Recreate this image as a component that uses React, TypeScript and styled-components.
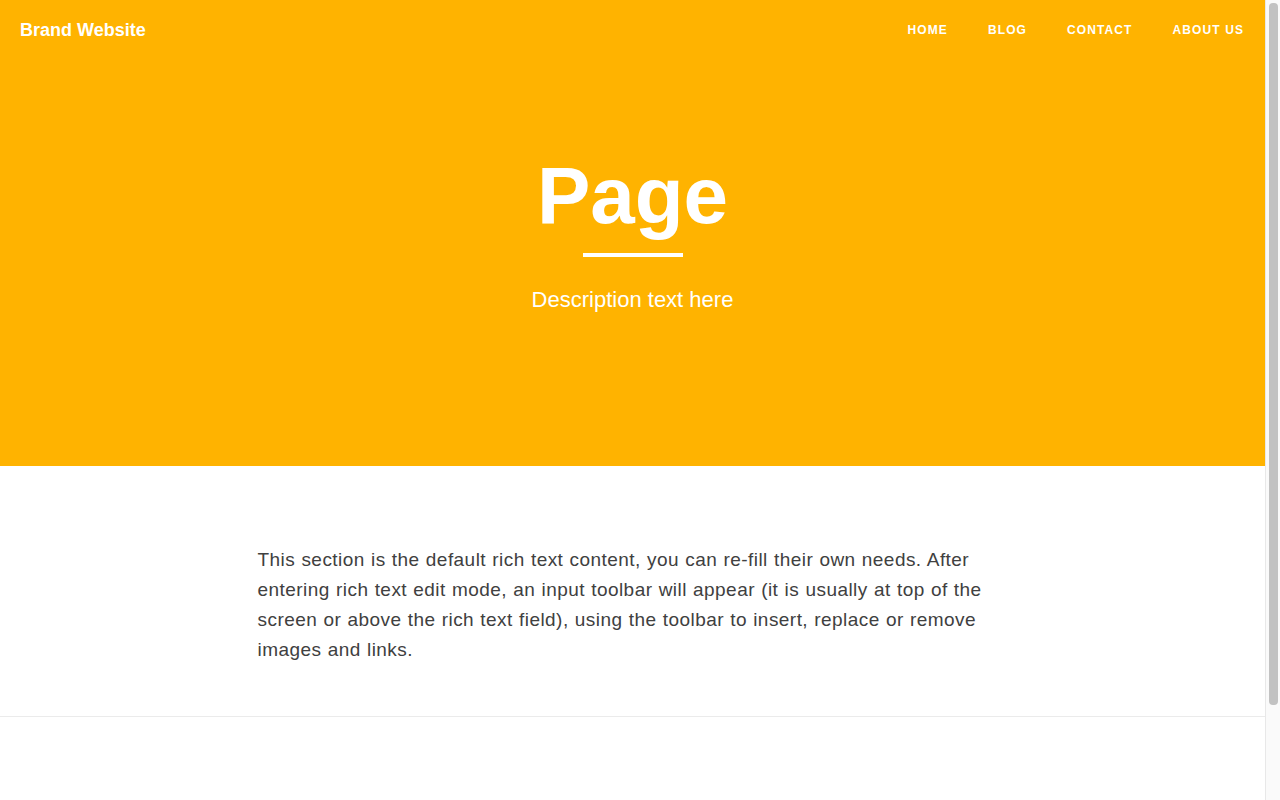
import React from "react";
import styled, { createGlobalStyle } from "styled-components";

const Global = createGlobalStyle`
  html, body { margin: 0; padding: 0; background: #fff; }
  body { font-family: "Liberation Sans", Arial, Helvetica, sans-serif; -webkit-font-smoothing: antialiased; }
  * { box-sizing: border-box; }
`;

const Page = styled.div`
  width: calc(100vw - 15px);
`;

const ScrollTrack = styled.div`
  position: fixed;
  top: 0;
  right: 0;
  width: 15px;
  height: 100vh;
  background: #fafafa;
  border-left: 1px solid #e8e8e8;
  padding: 3px 2px 0 3px;
`;

const ScrollThumb = styled.div`
  height: 702px;
  background: #c2c2c2;
  border-radius: 4px;
`;

const Hero = styled.header`
  background: #ffb300;
  height: 466px;
  display: flex;
  flex-direction: column;
  color: #fff;
`;

const NavBar = styled.nav`
  display: flex;
  align-items: center;
  justify-content: space-between;
  height: 60px;
  padding: 0 21px 0 20px;
`;

const Brand = styled.a`
  font-size: 18px;
  font-weight: 700;
  color: #fff;
  text-decoration: none;
`;

const Menu = styled.ul`
  list-style: none;
  display: flex;
  gap: 40px;
  margin: 0;
  padding: 0;
`;

const MenuItem = styled.li`
  font-size: 12px;
  font-weight: 700;
  letter-spacing: 1.1px;
  text-transform: uppercase;
  margin-top: -1px;
`;

const HeroBody = styled.div`
  display: flex;
  flex-direction: column;
  align-items: center;
  padding-top: 96px;
`;

const Title = styled.h1`
  margin: 0;
  font-size: 80px;
  line-height: 1;
  font-weight: 700;
`;

const Rule = styled.div`
  width: 100px;
  height: 4px;
  background: #fff;
  margin-top: 17px;
`;

const Subtitle = styled.p`
  margin: 30px 0 0;
  font-size: 22px;
  font-weight: 300;
`;

const Content = styled.section`
  padding: 79px 0 51px;
  border-bottom: 1px solid #ebebeb;
`;

const Inner = styled.div`
  width: 750px;
  margin: 0 auto;
`;

const Para = styled.p`
  margin: 0;
  font-size: 19px;
  letter-spacing: 0.45px;
  word-spacing: 0.5px;
  line-height: 30px;
  color: #404040;
`;

const Footer = styled.footer`
  height: 300px;
`;

export default function App() {
  return (
    <>
      <Global />
      <Page>
        <Hero>
          <NavBar>
            <Brand href="#">Brand Website</Brand>
            <Menu>
              <MenuItem>Home</MenuItem>
              <MenuItem>Blog</MenuItem>
              <MenuItem>Contact</MenuItem>
              <MenuItem>About Us</MenuItem>
            </Menu>
          </NavBar>
          <HeroBody>
            <Title>Page</Title>
            <Rule />
            <Subtitle>Description text here</Subtitle>
          </HeroBody>
        </Hero>
        <Content>
          <Inner>
            <Para>
              This section is the default rich text content, you can re-fill their own needs. After entering rich text edit mode, an input toolbar will appear (it is usually at top of the screen or above the rich text field), using the toolbar to insert, replace or remove images and links.
            </Para>
          </Inner>
        </Content>
        <Footer />
      </Page>
      <ScrollTrack>
        <ScrollThumb />
      </ScrollTrack>
    </>
  );
}
